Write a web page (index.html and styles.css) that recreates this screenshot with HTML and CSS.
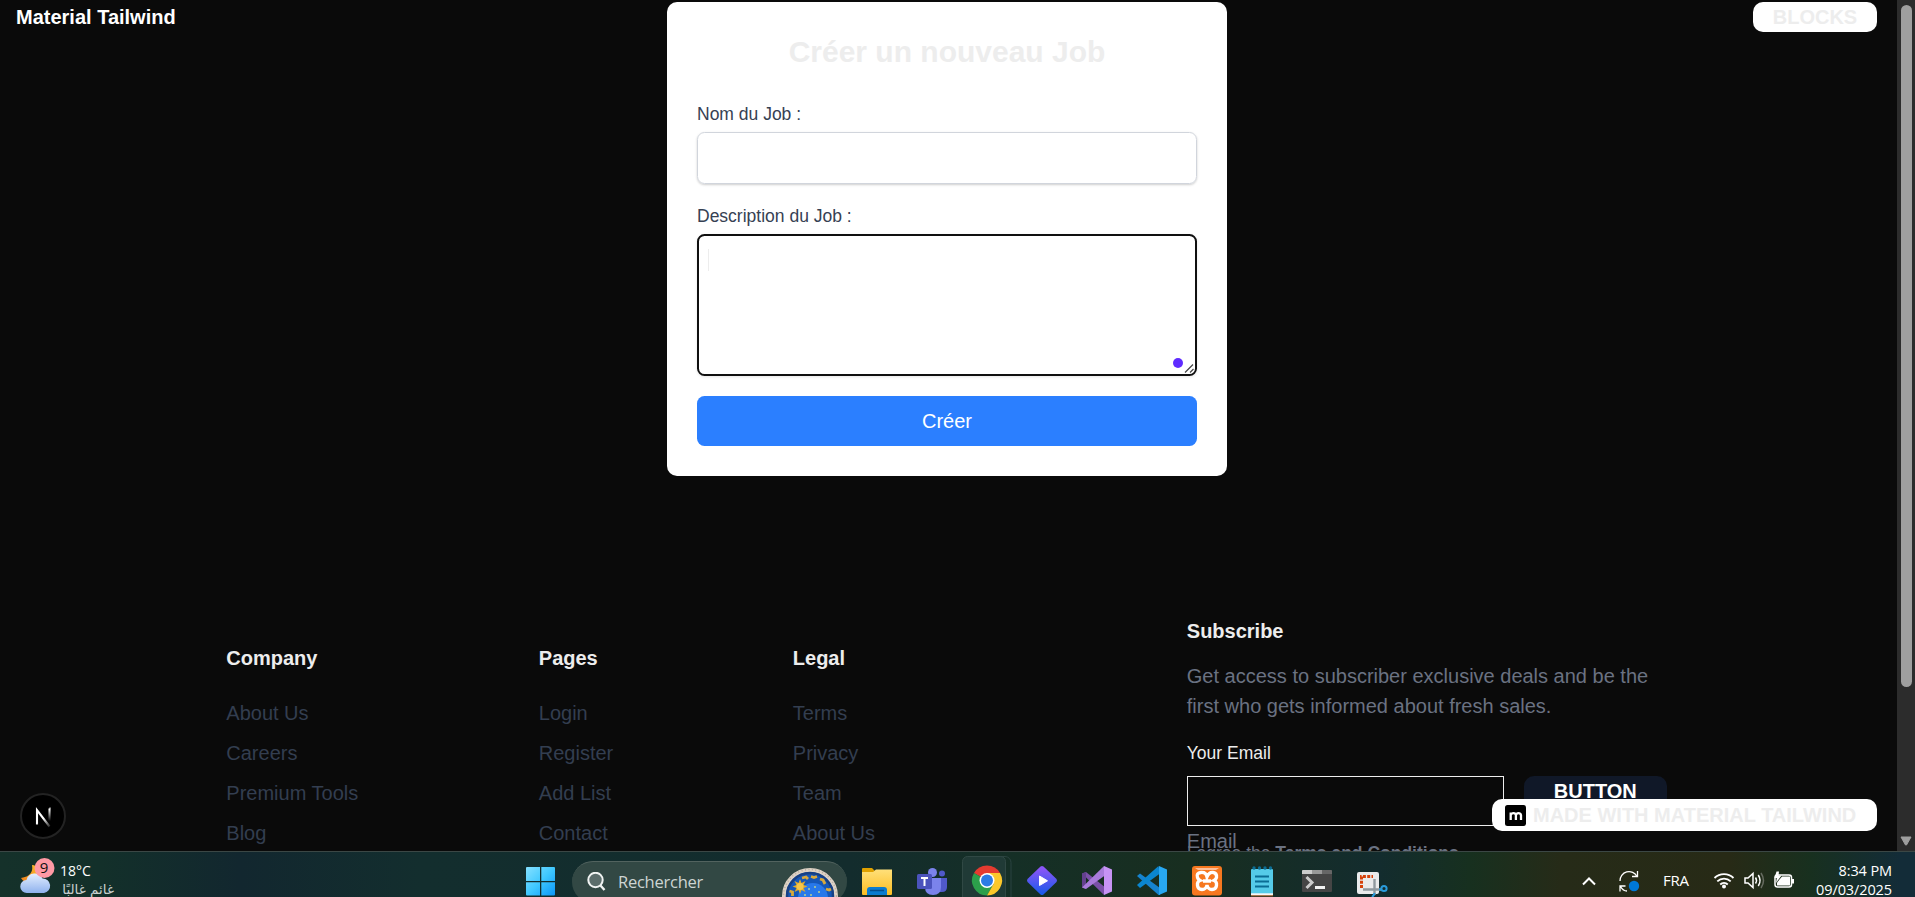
FILE: index.html
```html
<!DOCTYPE html>
<html lang="fr">
<head>
<meta charset="utf-8">
<title>Créer un nouveau Job</title>
<link rel="stylesheet" href="styles.css">
</head>
<body>
<div class="screen">
  <div class="browser">
    <div class="page">
      <header class="top">
        <a class="brand">Material Tailwind</a>
        <form class="card">
          <h1 class="card-title">Créer un nouveau Job</h1>
          <label class="label">Nom du Job :</label>
          <div class="input"></div>
          <label class="label">Description du Job :</label>
          <div class="textarea">
            <span class="caret"></span>
            <span class="dot"></span>
            <svg class="grip" width="11" height="11" viewBox="0 0 11 11" fill="none" stroke="#444" stroke-width="1.2"><path d="M1 9.500 9 1.500M6 9.500 9.500 6"/></svg>
          </div>
          <div class="submit">Créer</div>
        </form>
        <div class="blocks">BLOCKS</div>
      </header>

      <footer class="footer">
        <div class="col"><h2>Company</h2><ul><li>About Us</li><li>Careers</li><li>Premium Tools</li><li>Blog</li></ul></div>
        <div class="col"><h2>Pages</h2><ul><li>Login</li><li>Register</li><li>Add List</li><li>Contact</li></ul></div>
        <div class="col"><h2>Legal</h2><ul><li>Terms</li><li>Privacy</li><li>Team</li><li>About Us</li></ul></div>
        <div class="subscribe">
          <h2>Subscribe</h2>
          <p class="pitch">Get access to subscriber exclusive deals and be the<br>first who gets informed about fresh sales.</p>
          <div class="email-label">Your Email</div>
          <div class="email-row"><div class="email-input"></div><div class="email-button">BUTTON</div></div>
          <div class="email-hint">Email</div>
          <div class="agree">I agree the <b>Terms and Conditions</b></div>
        </div>
      </footer>

      <div class="next-badge">
        <svg width="46" height="46" viewBox="0 0 46 46">
          <defs>
            <linearGradient id="n1" x1="25" y1="24" x2="31" y2="32" gradientUnits="userSpaceOnUse"><stop offset="0" stop-color="#fff"/><stop offset="1" stop-color="#fff" stop-opacity=".2"/></linearGradient>
            <linearGradient id="n2" x1="0" y1="16" x2="0" y2="28" gradientUnits="userSpaceOnUse"><stop offset="0" stop-color="#fff"/><stop offset="1" stop-color="#fff" stop-opacity="0"/></linearGradient>
          </defs>
          <circle cx="23" cy="23" r="22" fill="#000" stroke="#232323" stroke-width="2"/>
          <path d="M17 31.500V17.200L29.500 33.500" fill="none" stroke="url(#n1)" stroke-width="2.100"/>
          <path d="M29.500 15.500h.01V28" fill="none" stroke="url(#n2)" stroke-width="2.100"/>
        </svg>
      </div>
      <div class="made">
        <svg width="21" height="21" viewBox="0 0 21 21"><rect width="21" height="21" rx="2.500" fill="#000"/><path d="M5.700 15V7.500M5.700 10.200Q6.300 8.200 8.500 8.200T10.900 10.200V15M10.900 10.200Q11.500 8.200 13.500 8.200T16 10.200V15" fill="none" stroke="#fff" stroke-width="2.300"/></svg>
        <span>MADE WITH MATERIAL TAILWIND</span>
      </div>
    </div>
    <div class="scrollbar">
      <div class="thumb"></div>
      <svg width="12" height="10" viewBox="0 0 12 10"><path d="M1 1H11L6.500 9H5.500Z" fill="#9f9f9f" stroke="#9f9f9f" stroke-linejoin="round"/></svg>
    </div>
  </div>

  <div class="taskbar">
    <div class="weather">
      <svg width="40" height="45" viewBox="0 0 40 45">
        <defs>
          <linearGradient id="cl" x1="0" y1="0" x2="0" y2="1"><stop offset="0" stop-color="#e4efff"/><stop offset="1" stop-color="#8fb2ee"/></linearGradient>
          <linearGradient id="mo" x1="1" y1="0" x2="0" y2="1"><stop offset="0" stop-color="#fbc02d"/><stop offset="1" stop-color="#ef7c1a"/></linearGradient>
        </defs>
        <path d="M16 14Q18 25 5 27Q9 34 18 32Q27 28 23 18Q20 14 16 14Z" fill="url(#mo)"/>
        <path d="M11 42a6.500 6.500 0 0 1-.5-13 8.500 8.500 0 0 1 16-1.500A7.300 7.300 0 0 1 28 42Z" fill="url(#cl)"/>
        <circle cx="28.500" cy="17" r="10" fill="#ff99a4"/>
      </svg>
      <span class="count">9</span>
      <div class="weather-text"><div>18°C</div><div class="arabic" dir="rtl">غائم غالبًا</div></div>
    </div>

    <svg class="cell" viewBox="0 0 55 45">
      <defs><linearGradient id="wi" x1="13" y1="15" x2="42" y2="44" gradientUnits="userSpaceOnUse"><stop offset="0" stop-color="#85e0ff"/><stop offset=".5" stop-color="#3fc8ff"/><stop offset="1" stop-color="#0a96f8"/></linearGradient></defs>
      <path d="M14 15H27V29H13V16Q13 15 14 15ZM28.300 15H41Q42 15 42 16V29H28.300ZM13 30.300H27V43.500H14Q13 43.500 13 42.500ZM28.300 30.300H42V42.500Q42 43.500 41 43.500H28.300Z" fill="url(#wi)"/>
    </svg>

    <div class="search">
      <svg width="20" height="20" viewBox="0 0 20 20" fill="none" stroke="#f0f3f2" stroke-width="2"><circle cx="8.500" cy="8" r="7.200" fill="#5b6d6b"/><path d="M13.500 13.500 17.500 18" stroke-width="2.400"/></svg>
      <span>Rechercher</span>
      <svg class="dome" width="58" height="32" viewBox="0 0 58 32">
        <circle cx="29" cy="29" r="26" fill="#1557b8" stroke="#ddd2c5" stroke-width="4"/>
        <circle cx="29" cy="29" r="26.500" fill="none" stroke="#b9aba0" stroke-width="1.500" stroke-dasharray="1 2.500"/>
        <circle cx="29" cy="29" r="23" fill="none" stroke="#174084" stroke-width="2.500"/>
        <circle cx="32" cy="31" r="15" fill="#2878ea"/>
        <path d="M19 12l1.500 4 4-2-2 4 4 1.500-4 1.500 2 4-4-2-1.500 4-1.500-4-4 2 2-4-4-1.500 4-1.500-2-4 4 2z" fill="#e0aa2d"/><circle cx="19" cy="19.500" r="3.500" fill="#f4c64c"/>
        <g fill="none" stroke="#d9a93c" stroke-width="2.800"><path d="M21 11l4-1 2 2M30 9.500l3 1 3-1M39 12l3 1 2 4M45 22l3 1 2-1M8.500 24l3 1v4"/></g>
        <g fill="#b9d08c"><circle cx="28" cy="22" r="1"/><circle cx="34" cy="20" r="1"/><circle cx="38" cy="25" r="1"/><circle cx="30" cy="28" r="1"/><circle cx="24" cy="28" r="1"/></g>
      </svg>
    </div>

    <div class="apps">
      <svg class="cell" viewBox="0 0 55 45">
        <defs><linearGradient id="fo" x1="0" y1="0" x2="0" y2="1"><stop offset="0" stop-color="#ffe07a"/><stop offset="1" stop-color="#fcbd22"/></linearGradient></defs>
        <path d="M13 17q0-1 1-1h9l3 3h17v20H13z" fill="#e0a100"/><path d="M13 20h11l3-2.500h16v24.500q0 1-1 1H14q-1 0-1-1z" fill="url(#fo)"/>
        <path d="M18 43v-5q0-3 3-3h14q3 0 3 3v5z" fill="#0b7cd0"/><path d="M21 38.500h14" stroke="#064f8d" stroke-width="1.500"/>
      </svg>
      <svg class="cell" viewBox="0 0 55 45">
        <circle cx="28.500" cy="20.500" r="4.500" fill="#7b83eb"/><circle cx="38" cy="21.500" r="3" fill="#5059c9"/>
        <path d="M34 26h9v9q0 5-5 5h-4z" fill="#5059c9"/><path d="M21 26h16v9q0 8-8 8t-8-8z" fill="#7b83eb"/>
        <rect x="13" y="22" width="15" height="15" rx="1.500" fill="#4b53bc"/><path d="M17 26h7M20.500 26v8" stroke="#fff" stroke-width="2"/>
      </svg>
      <svg class="cell" viewBox="0 0 55 45">
        <rect x="4" y="4.500" width="48" height="48" rx="6" fill="none" stroke="#2b4340"/><rect x="3.500" y="4.500" width="43" height="48" rx="5" fill="#203a36" stroke="#304844"/>
        <path d="M28 28.500 15 21A15 15 0 0 1 41 21Z" fill="#e53b30"/><path d="M28 28.500 15 21A15 15 0 0 0 28 43.500L34.500 32Z" fill="#2c9f4b"/><path d="M28 21H41A15 15 0 0 1 28 43.500L34.500 32Z" fill="#fcc82a"/>
        <circle cx="28" cy="28.500" r="7.500" fill="#fff"/><circle cx="28" cy="28.500" r="6" fill="#2c7be5"/>
      </svg>
      <svg class="cell" viewBox="0 0 55 45">
        <defs><linearGradient id="di" x1="0" y1="0" x2="0" y2="1"><stop offset=".1" stop-color="#8a55f7"/><stop offset="1" stop-color="#1559e8"/></linearGradient></defs>
        <path d="M26.500 14.500q1.500-1.200 3 0l13 12.500q1 1.500 0 3l-13 12.500q-1.500 1.200-3 0l-13-12.500q-1-1.500 0-3z" fill="url(#di)"/><path d="M25.500 24v9.500l8-4.700z" fill="#fff" stroke="#fff" stroke-linejoin="round"/>
      </svg>
      <svg class="cell" viewBox="0 0 55 45">
        <path d="M13 21.500 17 20 37 36 35 43z" fill="#7a50a8"/><path d="M13 21.500 17 20V37L13 35.500z" fill="#63408e"/><path d="M13 35.500 35 14 38 22 17 37z" fill="#a87bdb"/><path d="M35 14 43 17.500V39.500L35 43z" fill="#c793f5"/>
      </svg>
      <svg class="cell" viewBox="0 0 55 45">
        <path d="M13 24 16 21.500 36 36V43L34.500 43z" fill="#1683ce"/><path d="M13 33 34.500 14 36 21.500 16 36z" fill="#0a86d0"/><path d="M35 14 43 17.500V39.500L35 43z" fill="#28a8f2"/>
      </svg>
      <svg class="cell" viewBox="0 0 55 45">
        <rect x="13" y="14" width="30" height="29.500" rx="3" fill="#f67820"/><path d="M16 16h24l-3 2H19z" fill="#ffc19b"/>
        <path d="M28 25q-1-5-6-4.500t-3.500 5q.5 2 2.500 3-3 1-2.500 5t4.500 4 5-4.500q1 4.500 5 4.500t4.500-4-2.500-5q2-1 2.500-3 .5-4.500-3.500-5T28 25zM24 29h8" fill="none" stroke="#fff" stroke-width="3.300"/>
      </svg>
      <svg class="cell" viewBox="0 0 55 45">
        <rect x="17" y="17" width="22" height="26.500" rx="1" fill="#55cbe8"/><path d="M17 41.300h22v2H17z" fill="#f6f6f6"/><path d="M17 43.300h22v1H17z" fill="#c86a2c"/>
        <path d="M21 24.500h14M21 29.500h14M21 34.500h14" stroke="#0b6d94" stroke-width="1.800"/><g fill="#0b6d94"><circle cx="20" cy="16" r="1.700"/><circle cx="25.500" cy="16" r="1.700"/><circle cx="31" cy="16" r="1.700"/><circle cx="36.500" cy="16" r="1.700"/></g>
      </svg>
      <svg class="cell" viewBox="0 0 55 45">
        <rect x="13" y="18" width="30" height="22" rx="1" fill="#454545"/><path d="M13 22v-3q0-1 1-1h9v4z" fill="#ccc"/><path d="M23 18h10v4H23z" fill="#999"/><path d="M33 18h9q1 0 1 1v3H33z" fill="#666"/>
        <path d="M17.500 25 23 30.500 17.500 36" fill="none" stroke="#ccc" stroke-width="3"/><path d="M26 35.500h10" stroke="#f2f2f2" stroke-width="3"/>
      </svg>
      <svg class="cell" viewBox="0 0 55 45">
        <rect x="13" y="20" width="22" height="22" rx="2" fill="#e9ebec"/><path d="M17.500 36V24.500H29" fill="none" stroke="#d5420b" stroke-width="3" stroke-dasharray="3 1.300"/>
        <path d="M30.500 27V43M19 37.500h18" stroke="#8f999f" stroke-width="2.400"/><g fill="none" stroke="#2a9bdc" stroke-width="2"><circle cx="40" cy="36.500" r="2.600"/><path d="M35 37.500h3M30.500 41q0 2-2.500 4"/></g>
      </svg>
    </div>

    <div class="tray">
      <svg width="16" height="45" viewBox="0 0 16 45"><path d="M2 32.500 8 26.500 14 32.500" fill="none" stroke="#fff" stroke-width="2"/></svg>
      <svg class="sync" width="22" height="45" viewBox="0 0 22 45"><path d="M2 29a9 9 0 0 1 17-4.500M19.500 19v5.500H14M7.500 34H2v5.500M2.500 34.500Q5 39 9 39" fill="none" stroke="#fff" stroke-width="1.300"/><circle cx="16" cy="34" r="5.200" fill="#0078d7"/></svg>
      <span class="lang">FRA</span>
      <svg class="wifi" width="22" height="45" viewBox="0 0 22 45" fill="none" stroke="#fff" stroke-width="1.800"><path d="M1.500 26a13.500 13.500 0 0 1 19 0M4.300 29.300a9.500 9.500 0 0 1 13.400 0M7.200 32.500a5.500 5.500 0 0 1 7.600 0"/><circle cx="11" cy="34.500" r="2" fill="#fff" stroke="none"/></svg>
      <svg class="sound" width="22" height="45" viewBox="0 0 22 45" fill="none" stroke="#fff" stroke-width="1.500"><path d="M2 26h3l5-4.500v14L5 31H2zM12.500 25.500q2 3 0 6M15.300 23q3.500 5.500 0 11"/><path d="M18 21q5 7.500 0 15" stroke="#666b60"/></svg>
      <svg class="battery" width="22" height="45" viewBox="0 0 22 45"><rect x="2" y="23" width="16.500" height="12" rx="2.500" fill="none" stroke="#fff" stroke-width="1.500"/><path d="M9 24.500h8v9H4v-3z" fill="#fff"/><path d="M19 27h2v4.500h-2z" fill="#fff"/><path d="M3.500 19.500h2.500l-.5 4h3L3 31l.8-5H1.500z" fill="#fff"/></svg>
      <div class="clock"><div>8:34 PM</div><div>09/03/2025</div></div>
    </div>
  </div>
</div>
</body>
</html>
```
FILE: styles.css
```css
* { box-sizing: border-box; }
body { margin: 0; background: #0a0a0a; font-family: "Liberation Sans", Arial, sans-serif; font-size: 20px; line-height: 30px; color: #ededed; }
h1, h2, p, ul { margin: 0; padding: 0; }
ul { list-style: none; }
svg { display: block; flex: none; }

.screen { display: flex; flex-direction: column; width: 1915px; height: 897px; overflow: hidden; }
.browser { display: flex; height: 851px; }
.page { position: relative; width: 1897px; height: 851px; overflow: hidden; }

.top { display: grid; grid-template-columns: 651px 560px 1fr; align-items: start; padding: 2px 20px 0 16px; }
.brand { color: #fff; font-weight: 700; }
.blocks { justify-self: end; width: 124px; height: 30px; border-radius: 10px; background: #fff; font-weight: 700; text-align: center; }

.card { display: flex; flex-direction: column; height: 474px; padding: 30px; border-radius: 10px; background: #fff; }
.card-title { margin-bottom: 30px; font-size: 30px; line-height: 40px; text-align: center; }
.label { margin-bottom: 5px; font-size: 17.5px; line-height: 25px; color: #364153; }
.input { height: 52px; margin-bottom: 20px; border: 1px solid #d1d5dc; border-radius: 7.5px; box-shadow: 0 1px 3px rgba(0, 0, 0, .1), 0 1px 2px rgba(0, 0, 0, .1); }
.textarea { position: relative; height: 142px; margin-bottom: 20px; padding: 13px 9px; border: 2px solid #101010; border-radius: 7.5px; box-shadow: 0 1px 3px rgba(0, 0, 0, .1); }
.caret { display: block; width: 1px; height: 22px; background: #ededed; }
.dot { position: absolute; right: 12px; bottom: 6px; width: 10px; height: 10px; border-radius: 50%; background: #5f2bff; }
.grip { position: absolute; right: 0; bottom: 0; }
.submit { height: 50px; border-radius: 7.5px; background: #2b7fff; color: #fff; line-height: 50px; text-align: center; }

.footer { display: grid; grid-template-columns: 312.5px 254px 394px 480px; align-items: start; padding: 140px 0 0 226.3px; }
.footer h2 { font-size: 20px; line-height: 30px; }
.col { padding-top: 27px; }
.col ul { display: flex; flex-direction: column; gap: 10px; margin-top: 25px; color: #333e50; }
.pitch { margin-top: 15px; color: #6a7282; white-space: nowrap; }
.email-label { margin-top: 20px; font-size: 17.5px; line-height: 25px; }
.email-row { display: flex; gap: 20px; margin-top: 10px; }
.email-input { width: 317px; height: 50px; border: 1px solid #ededed; }
.email-button { width: 143px; height: 50px; border-radius: 10px; background: #101828; color: #fff; font-weight: 700; text-align: center; }
.email-hint { color: #6a7282; }
.agree { margin-top: -15px; font-size: 17.5px; line-height: 25px; color: #6a7282; }

.next-badge { position: absolute; left: 20px; top: 793px; }
.made { position: absolute; right: 20px; top: 799px; display: flex; align-items: center; gap: 7px; width: 385px; height: 32px; padding-left: 13px; border-radius: 10px; background: #fff; font-weight: 700; white-space: nowrap; }

.scrollbar { display: flex; flex-direction: column; align-items: center; justify-content: space-between; width: 18px; padding: 5px 0; background: #2c2c2c; }
.thumb { width: 11px; height: 682px; border-radius: 6px; background: #9f9f9f; }

.taskbar { display: flex; height: 46px; border-top: 1px solid #3b4745; overflow: hidden; color: #fff; font-family: "Open Sans", "Noto Sans", sans-serif; font-size: 15px; line-height: 19px; background: linear-gradient(90deg, #15312a 0, #13302a 100px, #12272f 240px, #132e2e 420px, #132c2d 850px, #152f26 1010px, #182e20 1190px, #132c2e 1380px, #17301f 1470px, #262b18 1560px, #272a16 1730px, #18301f 1810px, #132c38 1900px); }
.cell { width: 55px; height: 45px; }
.weather { position: relative; display: flex; width: 513px; padding-left: 16px; }
.weather > svg { margin-top: -1px; }
.count { position: absolute; left: 34px; top: 6px; width: 20px; color: #111; text-align: center; font-size: 15px; }
.weather-text { padding: 9px 0 0 4px; width: 70px; font-size: 14px; white-space: nowrap; }
.weather-text > div { height: 19px; }
.arabic { width: 54px; font-family: "DejaVu Sans", sans-serif; font-size: 13.5px; color: #c9d0cf; }
.search { display: flex; width: 275px; height: 42px; margin: 9px 2px 0 4px; padding: 10px 8px 0 15px; border-radius: 21px; border-top: 1px solid #52635f; background: #324844; color: #cdd5d3; font-size: 16.5px; line-height: 20px; }
.search span { margin: 0 auto 0 11px; letter-spacing: -.25px; }
.dome { margin-top: -5px; }
.apps { display: flex; }
.tray { display: flex; margin-left: 182px; }
.sync { margin-left: 21px; }
.lang { width: 26px; margin: 19px 0 0 23px; font-size: 15px; letter-spacing: -.3px; }
.wifi { margin-left: 24px; }
.sound { margin-left: 8px; }
.battery { margin-left: 8px; }
.clock { width: 97px; padding-top: 9px; text-align: right; font-size: 14.5px; letter-spacing: -.1px; }
```
